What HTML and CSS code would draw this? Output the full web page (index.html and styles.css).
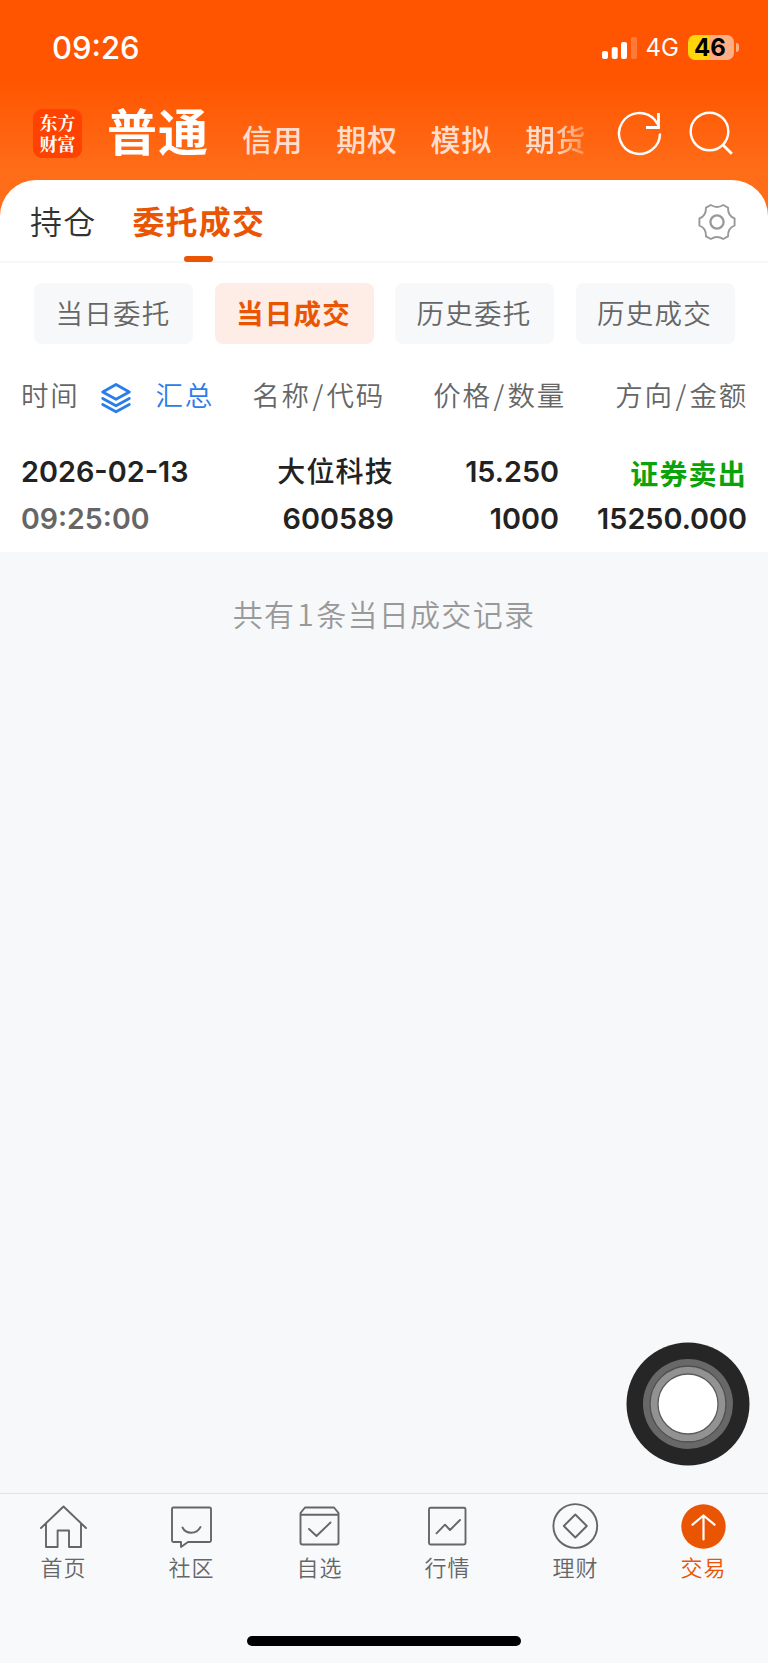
FILE: index.html
```html
<!DOCTYPE html>
<html lang="zh-CN">
<head>
<meta charset="utf-8">
<title>委托成交</title>
<link rel="stylesheet" href="styles.css">
</head>
<body>
<div class="app">
  <header class="top">
    <div class="status">
      <span class="clock">09:26</span>
      <div class="status-right">
        <svg class="signal" width="36" height="24" viewBox="0 0 36 24" fill="#fff">
          <rect x="0" y="15" width="6" height="8" rx="2"/><rect x="9.7" y="11" width="6" height="12" rx="2"/><rect x="19" y="6" width="6" height="17" rx="2"/><rect x="29" y="1" width="6" height="22" rx="2" opacity=".22"/>
        </svg>
        <span class="net">4G</span>
        <span class="battery">46</span>
        <span class="nub"></span>
      </div>
    </div>
    <nav class="accounts">
      <div class="logo">东方<br>财富</div>
      <div class="account-list">
        <span class="account-on">普通</span>
        <span class="account">信用</span>
        <span class="account">期权</span>
        <span class="account">模拟</span>
        <span class="account account-fade">期货</span>
      </div>
      <svg class="act-refresh" width="46" height="46" viewBox="0 0 46 46" fill="none" stroke="#fff" stroke-width="2.4">
        <path d="M43 23.500A20.500 20.500 0 1 1 37.500 9.500L42 16"/><path d="M41.500 3v14.500H29" stroke-width="2.800"/>
      </svg>
      <svg class="act-search" width="46" height="46" viewBox="0 0 46 46" fill="none" stroke="#fff" stroke-width="2.4">
        <circle cx="21.5" cy="20.5" r="18.8"/><path d="M34.5 33.5l9.3 9.3" stroke-width="2.8"/>
      </svg>
    </nav>
  </header>

  <main class="panel">
    <div class="tabs">
      <span class="tab">持仓</span>
      <span class="tab tab-on">委托成交</span>
      <svg class="gear" width="40" height="40" viewBox="-20 -20 40 40" fill="none" stroke="#999" stroke-linejoin="round">
        <path stroke-width="1.900" d="M-6.200 -17Q0 -13 6.200 -17L11 -14.400Q10.800 -5.800 17.600 -3.600V3.600Q10.800 5.800 11 14.400L6.200 17Q0 13 -6.200 17L-11 14.400Q-10.800 5.800 -17.600 3.600V-3.600Q-10.800 -5.800 -11 -14.400Z"/>
        <circle r="6.600" stroke-width="2.300"/>
      </svg>
    </div>
    <div class="chips">
      <span class="chip">当日委托</span>
      <span class="chip chip-on">当日成交</span>
      <span class="chip">历史委托</span>
      <span class="chip">历史成交</span>
    </div>
    <div class="grid head">
      <div class="head-time">
        <span>时间</span>
        <svg class="layers" width="32" height="32" viewBox="0 0 32 32" fill="none" stroke="#2b7de9" stroke-width="2.800" stroke-linejoin="round" stroke-linecap="round">
          <path d="M16 2.500L29.300 10L16 17.300L2.700 10Z"/><path d="M2.700 16.500L16 23.800L29.300 16.500"/><path d="M2.700 22.500L16 29.800L29.300 22.500"/>
        </svg>
        <span class="sum">汇总</span>
      </div>
      <span>名称<i class="slash">/</i>代码</span><span>价格<i class="slash">/</i>数量</span><span>方向<i class="slash">/</i>金额</span>
    </div>
    <div class="grid row">
      <div class="cell"><span class="num">2026-02-13</span><span class="num dim">09:25:00</span></div>
      <div class="cell"><span class="name">大位科技</span><span class="num">600589</span></div>
      <div class="cell"><span class="num">15.250</span><span class="num">1000</span></div>
      <div class="cell"><span class="name sell">证券卖出</span><span class="num">15250.000</span></div>
    </div>
  </main>

  <section class="rest">
    <p class="count">共有<span class="total">1</span>条当日成交记录</p>
    <svg class="touch" width="124" height="124" viewBox="-62 -62 124 124">
      <circle r="61.500" fill="#262626"/><circle r="45" fill="#686868"/><circle r="38" fill="#929292" stroke="#505050" stroke-width="1.300"/><circle r="30" fill="#fff" stroke="#5c5c5c" stroke-width="1.300"/>
    </svg>
  </section>

  <footer class="bottom">
    <nav class="menu">
      <div class="item">
        <svg width="50" height="50" viewBox="0 0 50 50"><path d="M3 27L25.500 5.500L48 27M8 22.500V46H19.600V29.500H31V46H43V22.500"/></svg>
        <span>首页</span>
      </div>
      <div class="item">
        <svg width="50" height="50" viewBox="0 0 50 50"><path d="M7 6.500H43.500Q45 6.500 45 8V39.500Q45 41 43.500 41H22L15 46V41H7.500Q6 41 6 39.500V8Q6 6.500 7.500 6.500M16.500 26.500Q19 31.700 25.200 31.700T34.500 26"/></svg>
        <span>社区</span>
      </div>
      <div class="item">
        <svg width="50" height="50" viewBox="0 0 50 50"><path d="M11 6.500H40L44.500 12V41.500Q44.500 43.500 42.500 43.500H8.500Q6.500 43.500 6.500 41.500V12ZM6.500 13.700H44.500M15 28L22.500 35L36.500 21.500"/></svg>
        <span>自选</span>
      </div>
      <div class="item">
        <svg width="50" height="50" viewBox="0 0 50 50"><rect x="7" y="6.700" width="36.500" height="36.800" rx="1.500"/><path d="M14.500 32.300L23 23.700L28 29L38 19"/></svg>
        <span>行情</span>
      </div>
      <div class="item">
        <svg width="50" height="50" viewBox="0 0 50 50"><circle cx="25.300" cy="25" r="21.900"/><path d="M25.300 13.500L36.800 25L25.300 36.500L13.800 25Z"/></svg>
        <span>理财</span>
      </div>
      <div class="item item-on">
        <svg width="50" height="50" viewBox="0 0 50 50"><circle class="disc" cx="25.500" cy="25.500" r="22.200"/><path class="arrow" d="M25.500 38.500V14.500M14.500 23.700L25.500 14.500L36.500 23.700"/></svg>
        <span>交易</span>
      </div>
    </nav>
    <div class="homebar"></div>
  </footer>
</div>
</body>
</html>
```
FILE: styles.css
```css
* { box-sizing: border-box; }

body {
  margin: 0;
  background: #f7f8fa;
  font-family: "Noto Sans CJK SC", sans-serif;
  color: #222;
}

.app {
  width: 768px;
  height: 1663px;
  display: flex;
  flex-direction: column;
  overflow: hidden;
}

.app span, .count { white-space: nowrap; }

/* header */
.top {
  height: 220px;
  flex: none;
  background: linear-gradient(#ff5500 0, #ff5500 78px, #ff6d19 172px);
  color: #fff;
}

.status {
  height: 96px;
  padding: 0 29px 2px 52px;
  display: flex;
  align-items: center;
  justify-content: space-between;
  font-family: Inter, sans-serif;
}

.clock { font-size: 31px; font-weight: 500; }
.status-right { display: flex; align-items: center; }
.signal { margin-top: 1px; }
.net { margin-left: 8px; font-size: 24px; width: 42.500px; letter-spacing: -.1px; }

.battery {
  width: 46px;
  height: 25px;
  border-radius: 7px;
  background: linear-gradient(90deg, #ffd60a 21px, #ffad85 21px);
  color: #000;
  font-size: 24px;
  line-height: 25px;
  font-weight: 700;
  text-align: center;
  padding-right: 2px;
}

.nub { width: 3px; height: 9px; margin-left: 2px; background: #ffad85; border-radius: 0 4px 4px 0; }

.accounts {
  height: 84px;
  padding-left: 33px;
  display: flex;
  align-items: flex-start;
}

.logo {
  width: 49px;
  height: 49px;
  margin-top: 13px;
  padding-top: 3px;
  border-radius: 9px;
  background: #ff4200;
  text-align: center;
  font-family: "Noto Serif CJK SC", "Noto Sans CJK SC", sans-serif;
  font-size: 18px;
  line-height: 20.500px;
  font-weight: 700;
}

.account-list {
  width: 511px;
  height: 84px;
  padding-left: 25px;
  display: flex;
  align-items: baseline;
  line-height: 66px;
}

.account-on { width: 135px; font-size: 50px; font-weight: 700; letter-spacing: 1px; }
.account { width: 94.300px; font-size: 30px; font-weight: 500; letter-spacing: .6px; color: #ffddcc; }

.account-fade {
  width: auto;
  color: transparent;
  background: linear-gradient(90deg, #ffddcc 45%, #ff8f50 100%);
  -webkit-background-clip: text;
  background-clip: text;
}

.act-refresh { margin: 14px 0 0 24px; }
.act-search { margin: 15px 0 0 25px; }

/* white panel */
.panel {
  flex: none;
  height: 372px;
  margin-top: -40px;
  background: #fff;
  border-radius: 36px 36px 0 0;
}

.tabs {
  height: 83px;
  padding: 0 31px 0 30px;
  display: flex;
  align-items: flex-start;
  border-bottom: 2px solid #f7f7f9;
  line-height: 80px;
  font-size: 32px;
  letter-spacing: 1.200px;
}

.tab { margin-right: 36px; color: #333; font-weight: 350; }

.tab-on {
  height: 82px;
  display: flex;
  flex-direction: column;
  align-items: center;
  color: #ea5504;
  font-weight: 700;
}

.tab-on::after {
  content: "";
  width: 29px;
  height: 6px;
  margin-top: -4px;
  border-radius: 3px;
  background: #ea5504;
}

.gear { margin: 22px 0 0 auto; }

.chips {
  padding: 20px 34px 0;
  display: grid;
  grid-template-columns: repeat(4, 159px);
  column-gap: 21.500px;
}

.chip {
  height: 61px;
  padding-right: 1px;
  border-radius: 8px;
  background: #f7f8fa;
  color: #666;
  font-size: 27.500px;
  font-weight: 350;
  letter-spacing: 1.300px;
  line-height: 59px;
  text-align: center;
}

.chip-on { background: #fdede6; color: #ea5504; font-weight: 700; }

.grid {
  display: grid;
  padding: 0 21px;
}

.head {
  height: 88px;
  grid-template-columns: 193px 171px 181px 182px;
  align-items: center;
  justify-items: end;
  padding-top: 11px;
  color: #666;
  font-size: 27.500px;
  font-weight: 350;
  line-height: 40px;
  letter-spacing: 1.700px;
}

.head-time { width: 193px; height: 40px; display: flex; justify-content: space-between; }
.layers { margin: 8px 4px 0 0; }
.slash { font-style: normal; margin: 0 1.500px 0 2px; }
.sum { color: #2b7de9; }

.row {
  grid-template-columns: 170px 203px 165px 188px;
  padding-top: 16px;
}

.cell { display: flex; flex-direction: column; align-items: flex-end; }
.cell:first-child { align-items: flex-start; }

.num {
  height: 47px;
  line-height: 47px;
  font-family: Inter, sans-serif;
  font-size: 28.800px;
  font-weight: 600;
}

.name { height: 47px; line-height: 45px; font-size: 28px; font-weight: 500; letter-spacing: 1.200px; }
.dim { color: #666; font-size: 28.500px; }
.sell { color: #0aa30a; font-weight: 700; line-height: 51px; }

/* empty area */
.rest { flex: 1; display: flex; flex-direction: column; justify-content: space-between; }

.count {
  margin: 38px 0 0;
  text-align: center;
  font-size: 30px;
  font-weight: 350;
  line-height: 46px;
  letter-spacing: 1.300px;
  color: #999;
}

.total { margin: 0 1px 0 2px; }

.touch { margin: 0 18px 27px auto; }

/* bottom bar */
.bottom { height: 170px; flex: none; border-top: 1px solid #e2e3e5; background: #f8f9fb; }
.menu { height: 142px; padding-top: 7px; display: grid; grid-template-columns: repeat(6, 1fr); }
.item { display: flex; flex-direction: column; align-items: center; color: #666; font-size: 22px; font-weight: 350; letter-spacing: 1px; line-height: 30px; }
.item span { margin-right: 1px; }
.item svg { fill: none; stroke: #666; stroke-width: 1.900; stroke-linejoin: round; stroke-linecap: round; margin-right: 2px; }
.item-on { color: #ea5504; }
.item .disc { fill: #ea5504; stroke: none; }
.item .arrow { stroke: #fff; stroke-width: 2.200; }
.homebar { width: 274px; height: 10px; margin: 0 auto; border-radius: 5px; background: #000; }
```
